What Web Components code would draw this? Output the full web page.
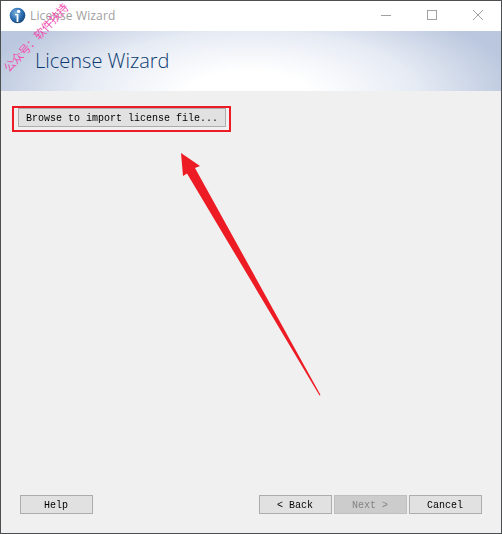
<!DOCTYPE html>
<html><head><meta charset="utf-8"><style>
html,body{margin:0;padding:0;background:#f0f0f0}
body{width:502px;height:534px;overflow:hidden}
</style></head><body>
<license-window></license-window>
<script>
const mono='"Liberation Mono","Noto Sans CJK SC",monospace';
class WizButton extends HTMLElement{
  constructor(){super();this.attachShadow({mode:'open'}).innerHTML=`<style>
  :host{display:flex;box-sizing:border-box;width:73px;height:19px;border:1px solid #adadad;background:#e1e1e1;align-items:center;justify-content:center;font:10px ${mono};color:#000;white-space:pre}
  :host([wide]){width:208px;}
  :host([disabled]){background:#cccccc;border-color:#bfbfbf;color:#838383}
  span{position:relative;top:1px;will-change:transform}
  </style><span><slot></slot></span>`;}
}
customElements.define('wiz-button',WizButton);
class TitleBar extends HTMLElement{
  constructor(){super();this.attachShadow({mode:'open'}).innerHTML=`<style>
  :host{display:flex;align-items:center;height:30px;background:#fff;box-sizing:border-box;padding-left:8px;padding-bottom:2px;flex:none}
  .t{font:12px "Open Sans",sans-serif;color:#a0a0a0;margin-left:4px;letter-spacing:.15px}
  .c{margin-left:auto;display:flex;align-self:flex-start}
  .c svg{display:block}
  </style>
  <svg width="17" height="17" viewBox="0 0 17 17"><defs><radialGradient id="g" cx=".4" cy=".35" r=".7"><stop offset="0" stop-color="#7fb2e0"/><stop offset=".6" stop-color="#2a6cb0"/><stop offset="1" stop-color="#12406f"/></radialGradient></defs><circle cx="8.5" cy="8.5" r="7.8" fill="url(#g)"/><circle cx="9.6" cy="4.4" r="1.7" fill="#fff"/><path d="M7.6 15V8.3H6V7H9.4V15Z" fill="#fff"/></svg>
  <span class="t">License Wizard</span>
  <span class="c"><svg width="152" height="30" viewBox="0 0 152 30"><path d="M32 14.5H42" stroke="#a0a0a0" fill="none"/><rect x="78.5" y="9.5" width="9" height="9" fill="none" stroke="#a0a0a0"/><path d="M124 9L134 19M134 9L124 19" stroke="#a0a0a0" fill="none"/></svg></span>`;}
}
customElements.define('title-bar',TitleBar);
class WizBanner extends HTMLElement{
  constructor(){super();this.attachShadow({mode:'open'}).innerHTML=`<style>
  :host{display:flex;align-items:center;height:60px;flex:none;padding-left:34px;box-sizing:border-box;
   background:radial-gradient(ellipse 270px 100px at 248px 62px,#fff 0%,#fff 22%,#e6ebf4 62%,#bac7de 100%) ;
   font:300 20px "Open Sans",sans-serif;color:#0b3a70}
  span{position:relative;top:-1px}
  </style><span><slot></slot></span>`;}
}
customElements.define('wiz-banner',WizBanner);
class RedFrame extends HTMLElement{
  constructor(){super();this.attachShadow({mode:'open'}).innerHTML=`<style>
  :host{box-sizing:border-box;width:219px;height:26px;border:2px solid #ed1c24;padding:0 3px 0 4px;display:flex;align-items:flex-start;}
  </style><slot></slot>`;}
}
customElements.define('red-frame',RedFrame);
class LicenseWindow extends HTMLElement{
  constructor(){super();this.attachShadow({mode:'open'}).innerHTML=`<style>
  :host{display:flex;flex-direction:column;box-sizing:border-box;width:502px;height:534px;border:1px solid #4b4f4f;background:#f0f0f0;position:relative;overflow:hidden}
  .main{flex:1;padding:15px 0 0 11px}
  .foot{display:flex;padding:0 19px 19px 19px;gap:2px}
  .sp{flex:1}
  .arrow{position:absolute;left:169px;top:144px}
  .wm{position:absolute;left:-9px;top:31px;width:88px;font:11.5px/1 "Noto Sans CJK SC",sans-serif;color:#f050b0;transform:rotate(-47deg);white-space:nowrap;letter-spacing:-.5px}
  </style>
  <title-bar></title-bar>
  <wiz-banner>License Wizard</wiz-banner>
  <div class="main"><red-frame><wiz-button wide>Browse to import license file...</wiz-button></red-frame></div>
  <div class="foot"><wiz-button>Help</wiz-button><span class="sp"></span><wiz-button>&lt; Back</wiz-button><wiz-button disabled>Next &gt;</wiz-button><wiz-button>Cancel</wiz-button></div>
  <svg class="arrow" width="160" height="255" viewBox="170 145 160 255"><path d="M181 153L200 166L195 168L320.5 395L319.5 395.5L187 173.5L183 176Z" fill="#ed1c24"/></svg>
  <span class="wm">公众号：软件扶持</span>`;}
}
customElements.define('license-window',LicenseWindow);
</script></body></html>
